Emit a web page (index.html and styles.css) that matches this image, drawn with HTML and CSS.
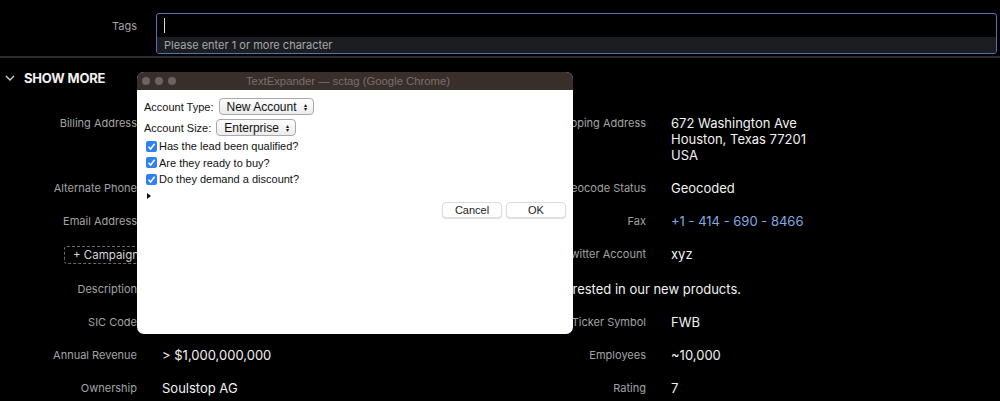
FILE: index.html
```html
<!DOCTYPE html>
<html lang="en">
<head>
    <meta charset="UTF-8">
    <meta name="viewport" content="width=device-width, initial-scale=1.0">
    <title>Account - Show more</title>
    <link rel="stylesheet" href="styles.css">
</head>
<body>

    <div class="page">
        <!-- Tags field -->
        <div class="tags-row">
            <label class="field-label" for="tags">Tags</label>
            <div class="tags-box">
                <div class="tags-input"><span class="caret"></span></div>
                <div class="tags-hint">Please enter 1 or more character</div>
            </div>
        </div>

        <div class="divider"></div>

        <div class="show-more">
            <svg class="chevron" width="10" height="6" viewBox="0 0 10 6"><path d="M1 1 L5 5 L9 1" fill="none" stroke="#cfcfcf" stroke-width="1.4"/></svg>
            <span>SHOW MORE</span>
        </div>

        <div class="fields">
            <div class="field-label">Billing Address</div>
            <div class="field-value"></div>
            <div class="field-label">Shipping Address</div>
            <div class="field-value">672 Washington Ave<br>Houston, Texas 77201<br>USA</div>

            <div class="field-label">Alternate Phone</div>
            <div class="field-value"></div>
            <div class="field-label">Geocode Status</div>
            <div class="field-value">Geocoded</div>

            <div class="field-label">Email Address</div>
            <div class="field-value"></div>
            <div class="field-label">Fax</div>
            <div class="field-value link">+1 - 414 - 690 - 8466</div>

            <div class="field-label"><span class="add-btn">+ Campaign</span></div>
            <div class="field-value"></div>
            <div class="field-label">Twitter Account</div>
            <div class="field-value">xyz</div>

            <div class="field-label">Description</div>
            <div class="field-value wide">The client runs a wholesale business in the regions and is truly interested in our new products.</div>

            <div class="field-label">SIC Code</div>
            <div class="field-value"></div>
            <div class="field-label">Ticker Symbol</div>
            <div class="field-value">FWB</div>

            <div class="field-label">Annual Revenue</div>
            <div class="field-value">&gt; $1,000,000,000</div>
            <div class="field-label">Employees</div>
            <div class="field-value">~10,000</div>

            <div class="field-label">Ownership</div>
            <div class="field-value">Soulstop AG</div>
            <div class="field-label">Rating</div>
            <div class="field-value">7</div>
        </div>

        <!-- TextExpander window over the page -->
        <div class="te-window">
            <div class="te-titlebar">
                <span class="light"></span><span class="light"></span><span class="light"></span>
                <div class="te-title">TextExpander — sctag (Google Chrome)</div>
            </div>
            <div class="te-body">
                <div class="te-row">
                    <span>Account Type:</span>
                    <span class="te-select">New Account <span class="arrows">&#x25B4;<br>&#x25BE;</span></span>
                </div>
                <div class="te-row">
                    <span>Account Size:</span>
                    <span class="te-select">Enterprise <span class="arrows">&#x25B4;<br>&#x25BE;</span></span>
                </div>
                <div class="te-check"><span class="box"><svg width="9" height="9" viewBox="0 0 9 9"><path d="M1.5 4.8 L3.6 7 L7.6 1.8" fill="none" stroke="#fff" stroke-width="1.5"/></svg></span>Has the lead been qualified?</div>
                <div class="te-check"><span class="box"><svg width="9" height="9" viewBox="0 0 9 9"><path d="M1.5 4.8 L3.6 7 L7.6 1.8" fill="none" stroke="#fff" stroke-width="1.5"/></svg></span>Are they ready to buy?</div>
                <div class="te-check"><span class="box"><svg width="9" height="9" viewBox="0 0 9 9"><path d="M1.5 4.8 L3.6 7 L7.6 1.8" fill="none" stroke="#fff" stroke-width="1.5"/></svg></span>Do they demand a discount?</div>
                <div class="te-disclosure"></div>
                <div class="te-buttons">
                    <button>Cancel</button>
                    <button>OK</button>
                </div>
            </div>
        </div>
    </div>

</body>
</html>
```

FILE: styles.css
```css
body {
    margin: 0;
    background: #000;
    font-family: Inter, "Noto Sans", sans-serif;
    color: #f2f2f2;
}
.page {
    position: relative;
    height: 401px;
    overflow: hidden;
}
.field-label {
    font-size: 11px;
    color: #a3a3a3;
    text-align: right;
    line-height: 16px;
}
/* Tags */
.tags-row {
    display: grid;
    grid-template-columns: 137px 841px;
    column-gap: 19px;
    padding-top: 13px;
}
.tags-row .field-label {
    padding-top: 5px;
}
.tags-box {
    border: 1px solid #5670b8;
    border-radius: 3px;
    overflow: hidden;
    height: 39px;
}
.tags-input {
    height: 23px;
    padding: 4px 0 0 7px;
    box-sizing: border-box;
}
.caret {
    display: block;
    width: 1px;
    height: 15px;
    background: #ddd;
}
.tags-hint {
    background: #1b1d21;
    height: 16px;
    font-size: 11px;
    line-height: 17px;
    color: #a8a8a8;
    padding-left: 7px;
}
.divider {
    height: 2px;
    background: #2c2c2c;
    margin-top: 2px;
}
.show-more {
    display: flex;
    align-items: center;
    gap: 9px;
    padding: 12px 0 0 5px;
    height: 16px;
    font-size: 13px;
    font-weight: 700;
    letter-spacing: -0.2px;
    color: #f2f2f2;
}
/* Field grid */
.fields {
    display: grid;
    grid-template-columns: 137px 338px 121px 1fr;
    column-gap: 25px;
    row-gap: 17px;
    padding-top: 29px;
}
.field-value {
    font-size: 13px;
    line-height: 16px;
}
.field-value.wide {
    grid-column: 2 / 5;
}
.link {
    color: #82a8e0;
}
.add-btn {
    display: inline-block;
    border: 1px dashed #6a6a6a;
    border-radius: 3px;
    padding: 0 14px 0 8px;
    color: #d6d6d6;
    font-size: 11.5px;
    margin-right: -17px;
}
/* TextExpander window */
.te-window {
    position: absolute;
    left: 137px;
    top: 72px;
    width: 436px;
    height: 262px;
    border-radius: 7px;
    overflow: hidden;
    background: #fff;
    font-family: "Liberation Sans", Arial, sans-serif;
    font-size: 11px;
    color: #111;
}
.te-titlebar {
    position: relative;
    height: 18px;
    background: #382f2b;
    display: flex;
    align-items: center;
    gap: 5px;
    padding-left: 5px;
}
.light {
    width: 8px;
    height: 8px;
    border-radius: 50%;
    background: #6a6360;
}
.te-title {
    position: absolute;
    left: 0;
    right: 14px;
    text-align: center;
    color: #7a716c;
    font-size: 11.3px;
}
.te-body {
    padding: 6px 7px 0 7px;
    display: flex;
    flex-direction: column;
}
.te-row {
    display: flex;
    align-items: center;
    gap: 5px;
    height: 21px;
}
.te-select {
    display: inline-flex;
    align-items: center;
    gap: 7px;
    height: 15px;
    padding: 0 6px 0 7px;
    border: 1px solid #a9a9a9;
    border-radius: 4px;
    background: linear-gradient(#fdfdfd, #ececec);
    font-size: 12px;
}
.arrows {
    font-size: 6px;
    line-height: 4px;
    text-align: center;
}
.te-check {
    display: flex;
    align-items: center;
    gap: 2px;
    height: 16.5px;
    font-size: 11px;
    padding-left: 2px;
}
.box {
    width: 11px;
    height: 11px;
    border-radius: 2px;
    background: #2f80f5;
    display: flex;
    align-items: center;
    justify-content: center;
}
.te-disclosure {
    width: 0;
    height: 0;
    margin: 5px 0 0 3px;
    border-left: 4px solid #111;
    border-top: 3px solid transparent;
    border-bottom: 3px solid transparent;
}
.te-buttons {
    display: flex;
    justify-content: flex-end;
    gap: 4px;
    margin-top: 3px;
}
.te-buttons button {
    width: 60px;
    height: 16px;
    padding: 0;
    border: 1px solid #dcdcdc;
    border-radius: 4px;
    background: #fff;
    box-shadow: 0 1px 1px rgba(0, 0, 0, 0.12);
    font-family: "Liberation Sans", Arial, sans-serif;
    font-size: 11px;
    color: #222;
}
```
